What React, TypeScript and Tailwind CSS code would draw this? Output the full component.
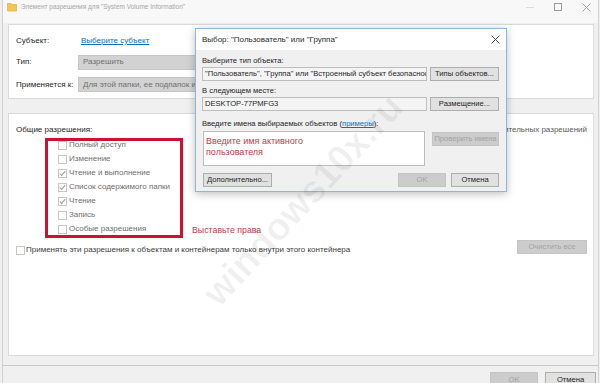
import React from "react";

function Check({ checked = false }: { checked?: boolean }) {
  return (
    <span className="w-[9px] h-[9px] border border-[#c6c6c6] bg-white flex items-center justify-center shrink-0">
      {checked && (
        <svg width="7" height="7" viewBox="0 0 7 7">
          <path d="M0.8 3.6 L2.7 5.4 L6.2 1.2" fill="none" stroke="#a0a0a0" strokeWidth="1.1" />
        </svg>
      )}
    </span>
  );
}

function Btn({ children, disabled = false, className = "" }: { children: React.ReactNode; disabled?: boolean; className?: string }) {
  return (
    <div
      className={
        "h-[14px] flex items-center justify-center border text-[7.6px] leading-none whitespace-nowrap " +
        (disabled ? "bg-[#cccccc] border-[#c4c4c4] text-[#a3a3a3] " : "bg-[#e1e1e1] border-[#adadad] text-[#1e1e1e] ") +
        className
      }
    >
      {children}
    </div>
  );
}

const perms: [string, boolean][] = [
  ["Полный доступ", false],
  ["Изменение", false],
  ["Чтение и выполнение", true],
  ["Список содержимого папки", true],
  ["Чтение", true],
  ["Запись", false],
  ["Особые разрешения", false],
];

export default function App() {
  return (
    <div className="w-[600px] h-[383px] relative overflow-hidden bg-[#f0f0f0] font-['Liberation_Sans',sans-serif] text-[8px] text-[#1e1e1e] whitespace-nowrap">
      <div className="h-full flex flex-col ml-[2px] mr-[1px] border-x border-[#d2d2d2]">
        {/* title bar */}
        <div className="h-[23px] shrink-0 bg-[#f8f8f8] flex items-start">
          <div className="h-[14px] w-full flex items-center pl-[4px]">
            <svg width="10" height="10" viewBox="0 0 10 10" className="shrink-0">
              <path d="M0.5 1.5 H4 L5 2.5 H9.5 V9 H0.5 Z" fill="#f4c64f" stroke="#d9a830" strokeWidth="0.6" />
            </svg>
            <span className="ml-[4px] text-[#a6a6a6] text-[6.5px]">Элемент разрешения для "System Volume Information"</span>
            <div className="ml-auto flex items-center">
              <span className="w-[8px] h-[1px] bg-[#dcdcdc] mr-[20px]" />
              <span className="w-[8px] h-[8px] border border-[#9a9a9a] mr-[20px]" />
              <svg width="9" height="9" viewBox="0 0 9 9" className="mr-[7px]">
                <path d="M0.5 0.5 L8.5 8.5 M8.5 0.5 L0.5 8.5" stroke="#9a9a9a" strokeWidth="0.9" />
              </svg>
            </div>
          </div>
        </div>

        {/* body */}
        <div className="flex-1 flex flex-col pl-[5px] pr-[4px]">
          {/* upper panel */}
          <div className="mt-[1px] h-[75px] shrink-0 bg-white border border-[#dadada] pl-[7px] pt-[9px] overflow-hidden">
            <div className="h-[14px] flex items-center">
              <span className="w-[62px] shrink-0">Субъект:</span>
              <span className="pl-[3px] text-[#0a6fc2] underline">Выберите субъект</span>
            </div>
            <div className="mt-[7px] h-[14px] flex items-center">
              <span className="w-[62px] shrink-0">Тип:</span>
              <div className="w-[300px] h-[15px] bg-[#d2d2d2] border border-[#c6c6c6] flex items-center px-[4px] text-[#707070]">Разрешить</div>
            </div>
            <div className="mt-[8px] h-[15px] flex items-center">
              <span className="w-[62px] shrink-0">Применяется к:</span>
              <div className="w-[300px] h-[15px] bg-[#d2d2d2] border border-[#c6c6c6] flex items-center px-[4px] text-[#707070] overflow-hidden">Для этой папки, ее подпапок и файлов</div>
            </div>
          </div>

          {/* lower panel */}
          <div className="mt-[14px] h-[243px] shrink-0 bg-white border border-[#dadada] pl-[7px] pr-[6px] pt-[9px] flex flex-col">
            <div className="h-[14px] flex items-center justify-between">
              <span>Общие разрешения:</span>
              <span className="text-[#5a5a5a]">Показать дополнительных разрешений</span>
            </div>
            <div className="mt-[1px] flex items-end">
              <div className="ml-[29px] w-[138px] h-[100px] border-[3px] border-[#cc1133] pl-[10px]">
                <div className="-mt-[3px] flex flex-col">
                  {perms.map(([t, c]) => (
                    <div key={t} className="h-[14px] flex items-center gap-[2px] text-[8px] text-[#6e6e6e]">
                      <Check checked={c} />
                      <span>{t}</span>
                    </div>
                  ))}
                </div>
              </div>
              <span className="ml-[9px] h-[14px] flex items-center text-[8.8px] text-[#c23a4c]">Выставьте права</span>
            </div>
            <div className="mt-[2px] flex items-start justify-between">
              <div className="mt-[3px] h-[14px] flex items-center gap-[1px] text-[#3c3c3c]">
                <Check />
                <span>Применять эти разрешения к объектам и контейнерам только внутри этого контейнера</span>
              </div>
              <Btn disabled className="w-[70px]">Очистить все</Btn>
            </div>
          </div>

          <div className="mt-[9px] border-t border-[#c8c8c8] -mr-[4px] -ml-[5px]" />
          <div className="mt-[6px] flex justify-end gap-[7px] -mr-[2px]">
            <Btn disabled className="w-[48px] h-[16px]">OK</Btn>
            <Btn className="w-[51px] h-[16px]">Отмена</Btn>
          </div>
        </div>
      </div>

      {/* dialog window */}
      <div className="absolute left-[195px] top-[28px] w-[312px] h-[164px] bg-[#f0f0f0] border border-[#8fb5d9] shadow-[0_2px_8px_rgba(0,0,0,0.25)] flex flex-col text-[7.6px]">
        <div className="h-[21px] shrink-0 bg-white flex items-center justify-between pl-[6px] pr-[6px]">
          <span className="text-[#2a2a2a] text-[8px]">Выбор: "Пользователь" или "Группа"</span>
          <svg width="9" height="9" viewBox="0 0 9 9">
            <path d="M0.5 0.5 L8.5 8.5 M8.5 0.5 L0.5 8.5" stroke="#333" strokeWidth="0.9" />
          </svg>
        </div>
        <div className="flex-1 flex flex-col pl-[6px] pr-[7px] pt-[5px]">
          <div className="h-[12px] flex items-center">Выберите тип объекта:</div>
          <div className="flex gap-[3px]">
            <div className="w-[225px] h-[14px] bg-[#f4f4f4] border border-[#bdbdbd] flex items-center px-[2px] overflow-hidden">"Пользователь", "Группа" или "Встроенный субъект безопасности"</div>
            <Btn className="w-[69px]">Типы объектов...</Btn>
          </div>
          <div className="mt-[4px] h-[12px] flex items-center">В следующем месте:</div>
          <div className="flex gap-[3px]">
            <div className="w-[225px] h-[14px] bg-[#f4f4f4] border border-[#bdbdbd] flex items-center px-[2px]">DESKTOP-77PMFG3</div>
            <Btn className="w-[69px]">Размещение...</Btn>
          </div>
          <div className="mt-[7px] h-[12px] flex items-center">
            Введите имена выбираемых объектов (<span className="text-[#0a6fc2] underline">примеры</span>):
          </div>
          <div className="mt-[1px] flex justify-between pl-[1px]">
            <div className="w-[222px] h-[35px] bg-white border border-[#bdbdbd] pl-[2px] pt-[4px] text-[9px] leading-[11px] text-[#c23a4c]">
              Введите имя активного
              <br />
              пользователя
            </div>
            <Btn disabled className="w-[67px] mt-[1px]">Проверить имена</Btn>
          </div>
          <div className="mt-[7px] flex pl-[1px]">
            <Btn className="w-[69px]">Дополнительно...</Btn>
            <Btn disabled className="w-[48px] ml-auto">OK</Btn>
            <Btn className="w-[48px] ml-[5px]">Отмена</Btn>
          </div>
        </div>
      </div>

      {/* watermark */}
      <div className="absolute left-[303px] top-[200px] -translate-x-1/2 -translate-y-1/2 rotate-[-47deg] pointer-events-none whitespace-nowrap font-['Liberation_Sans',sans-serif] text-[38px] font-bold text-black/[0.06]">
        windows10x.ru
      </div>
    </div>
  );
}
